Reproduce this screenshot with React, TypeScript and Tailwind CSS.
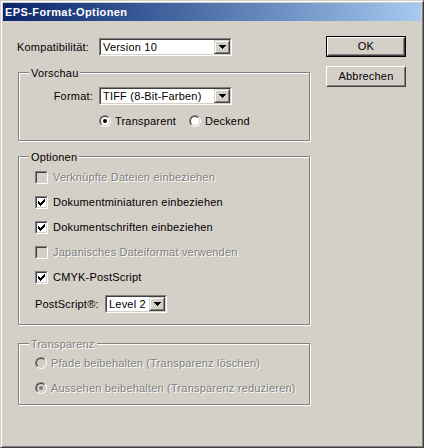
import React from "react";

function DropBtn() {
  return (
    <div className="flex w-[16px] h-full border border-t-[#d4d0c8] border-l-[#d4d0c8] border-r-[#404040] border-b-[#404040]">
      <div className="flex flex-1 items-center justify-center border border-t-white border-l-white border-r-[#808080] border-b-[#808080] bg-[#d4d0c8]">
        <svg width="7" height="4" viewBox="0 0 7 4" shapeRendering="crispEdges">
          <rect x="0" y="0" width="7" height="1" fill="#000" />
          <rect x="1" y="1" width="5" height="1" fill="#000" />
          <rect x="2" y="2" width="3" height="1" fill="#000" />
          <rect x="3" y="3" width="1" height="1" fill="#000" />
        </svg>
      </div>
    </div>
  );
}

function Combo({ className, text }: { className: string; text: string }) {
  return (
    <div className={`flex border border-t-[#808080] border-l-[#808080] border-r-white border-b-white ${className}`}>
      <div className="flex flex-1 border border-t-[#404040] border-l-[#404040] border-r-[#d4d0c8] border-b-[#d4d0c8] bg-white">
        <div className="flex flex-1 items-center pl-[2px] whitespace-nowrap overflow-hidden">{text}</div>
        <DropBtn />
      </div>
    </div>
  );
}

function Check({ checked, disabled, label }: { checked?: boolean; disabled?: boolean; label: string }) {
  return (
    <div className="flex items-center h-[13px] gap-[5px]">
      <div className="w-[13px] h-[13px] border border-t-[#808080] border-l-[#808080] border-r-white border-b-white">
        <div
          className={`flex items-center justify-center w-full h-full border border-t-[#404040] border-l-[#404040] border-r-[#d4d0c8] border-b-[#d4d0c8] ${
            disabled ? "bg-[#d4d0c8]" : "bg-white"
          }`}
        >
          {checked && (
            <svg width="7" height="7" viewBox="0 0 7 7" shapeRendering="crispEdges">
              <rect x="0" y="2" width="1" height="3" fill="#000" />
              <rect x="1" y="3" width="1" height="3" fill="#000" />
              <rect x="2" y="4" width="1" height="3" fill="#000" />
              <rect x="3" y="3" width="1" height="3" fill="#000" />
              <rect x="4" y="2" width="1" height="3" fill="#000" />
              <rect x="5" y="1" width="1" height="3" fill="#000" />
              <rect x="6" y="0" width="1" height="3" fill="#000" />
            </svg>
          )}
        </div>
      </div>
      <span className={`leading-[13px] whitespace-nowrap ${disabled ? "text-[#808080] [text-shadow:1px_1px_0_#fff]" : ""}`}>
        {label}
      </span>
    </div>
  );
}

function Radio({ checked, disabled, label, className }: { checked?: boolean; disabled?: boolean; label: string; className?: string }) {
  return (
    <div className={`flex items-center h-[12px] gap-[4px] ${className ?? ""}`}>
      <div className="w-[12px] h-[12px] rounded-full border border-t-[#808080] border-l-[#808080] border-r-white border-b-white -rotate-0">
        <div
          className={`flex items-center justify-center w-full h-full rounded-full border border-t-[#404040] border-l-[#404040] border-r-[#d4d0c8] border-b-[#d4d0c8] ${
            disabled ? "bg-[#d4d0c8]" : "bg-white"
          }`}
        >
          {checked && <div className={`w-[4px] h-[4px] rounded-full ${disabled ? "bg-[#808080]" : "bg-black"}`} />}
        </div>
      </div>
      <span className={`leading-[13px] whitespace-nowrap ${disabled ? "text-[#808080] [text-shadow:1px_1px_0_#fff]" : ""}`}>
        {label}
      </span>
    </div>
  );
}

function Group({
  title,
  disabled,
  className,
  children,
}: {
  title: string;
  disabled?: boolean;
  className: string;
  children: React.ReactNode;
}) {
  return (
    <div className={`relative ml-[1px] w-[292px] border border-[#808080] shadow-[inset_1px_1px_0_#fff,1px_1px_0_#fff] ${className}`}>
      <div
        className={`absolute left-[10px] -top-[6px] px-[2px] bg-[#d4d0c8] leading-[13px] ${
          disabled ? "text-[#808080] [text-shadow:1px_1px_0_#fff]" : ""
        }`}
      >
        {title}
      </div>
      {children}
    </div>
  );
}

export default function App() {
  return (
    <div className="w-[424px] h-[448px] bg-[#d4d0c8] text-black text-[11px] tracking-[0.2px] font-['Liberation_Sans',Arial,sans-serif] border border-t-[#d4d0c8] border-l-[#d4d0c8] border-r-[#404040] border-b-[#404040] shadow-[inset_1px_1px_0_#fff,inset_-1px_-1px_0_#808080] p-[2px] flex flex-col select-none">
      <div className="h-[18px] bg-linear-to-r from-[#0a246a] to-[#a6caf0] pl-[2px] flex items-center">
        <span className="text-white font-bold text-[11px] tracking-[0.4px] leading-[18px]">EPS-Format-Optionen</span>
      </div>
      <div className="flex pl-[14px] pt-[15px]">
        <div className="flex flex-col w-[294px] pt-[2px]">
          <div className="flex items-center h-[18px]">
            <div className="w-[82px] whitespace-nowrap">Kompatibilität:</div>
            <Combo className="w-[133px] h-[18px]" text="Version 10" />
          </div>

          <Group title="Vorschau" className="mt-[16px] h-[69px]">
            <div className="flex flex-col pt-[14px]">
              <div className="flex items-center h-[18px]">
                <div className="w-[74px] text-right">Format:</div>
                <Combo className="ml-[6px] w-[133px] h-[18px]" text="TIFF (8-Bit-Farben)" />
              </div>
              <div className="flex items-center mt-[10px] ml-[80px]">
                <Radio checked label="Transparent" className="w-[90px]" />
                <Radio label="Deckend" />
              </div>
            </div>
          </Group>

          <Group title="Optionen" className="mt-[15px] h-[169px]">
            <div className="flex flex-col pt-[14px] pl-[16px] gap-[12px]">
              <Check disabled label="Verknüpfte Dateien einbeziehen" />
              <Check checked label="Dokumentminiaturen einbeziehen" />
              <Check checked label="Dokumentschriften einbeziehen" />
              <Check disabled label="Japanisches Dateiformat verwenden" />
              <Check checked label="CMYK-PostScript" />
              <div className="flex items-center h-[18px] -mt-[1px]">
                <div className="w-[70px] whitespace-nowrap">PostScript®:</div>
                <Combo className="w-[62px] h-[18px]" text="Level 2" />
              </div>
            </div>
          </Group>

          <Group title="Transparenz" disabled className="mt-[18px] h-[62px]">
            <div className="flex flex-col pt-[13px] pl-[16px] gap-[13px]">
              <Radio disabled label="Pfade beibehalten (Transparenz löschen)" />
              <Radio disabled checked label="Aussehen beibehalten (Transparenz reduzieren)" />
            </div>
          </Group>
        </div>

        <div className="flex flex-col ml-[15px] gap-[9px]">
          <button type="button" className="w-[80px] h-[21px] border border-black">
            <div className="h-full border border-t-white border-l-white border-r-[#404040] border-b-[#404040]">
              <div className="h-full flex items-center justify-center border border-t-[#d4d0c8] border-l-[#d4d0c8] border-r-[#808080] border-b-[#808080]">
                OK
              </div>
            </div>
          </button>
          <button type="button" className="w-[80px] h-[21px] border border-t-white border-l-white border-r-[#404040] border-b-[#404040]">
            <div className="h-full flex items-center justify-center border border-t-[#d4d0c8] border-l-[#d4d0c8] border-r-[#808080] border-b-[#808080]">
              Abbrechen
            </div>
          </button>
        </div>
      </div>
    </div>
  );
}
